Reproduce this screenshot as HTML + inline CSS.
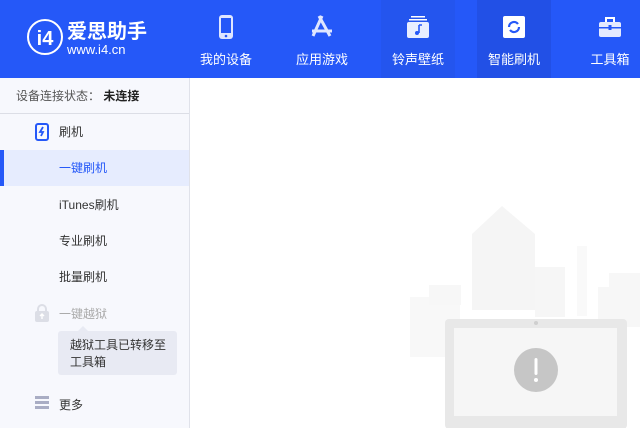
<!DOCTYPE html>
<html><head><meta charset="utf-8"><style>
*{margin:0;padding:0;box-sizing:border-box}
body{width:640px;height:428px;overflow:hidden;background:#fff;font-family:"Liberation Sans","Noto Sans CJK SC",sans-serif;position:relative}
.hdr{position:absolute;left:0;top:0;width:640px;height:78px;background:#2558f8}
.nav{position:absolute;top:0;height:78px;width:74px;text-align:center;color:#fff;font-size:13px}
.nav .lab{position:absolute;top:49px;left:0;right:0}
.nav svg{position:absolute;top:14px;left:50%;margin-left:-12px}
.side{position:absolute;left:0;top:78px;width:190px;height:350px;background:#f7f8fd;border-right:1px solid #e0e2ea}
.it{position:absolute;left:0;width:189px;height:36px;line-height:36px;padding-left:59px;font-size:12px;color:#333}
</style></head><body>
<div class="hdr"></div>
<svg style="position:absolute;left:26px;top:18px" width="38" height="38" viewBox="0 0 38 38"><circle cx="19" cy="19" r="17" fill="none" stroke="#fff" stroke-width="2"/><text x="19" y="27" text-anchor="middle" fill="#fff" font-size="20" font-weight="bold" font-family="Liberation Sans">i4</text></svg>
<div style="position:absolute;left:67px;top:15px;color:#fff;font-size:20px;font-weight:bold">爱思助手</div>
<div style="position:absolute;left:67px;top:42px;color:#fff;font-size:13px">www.i4.cn</div>

<div class="nav" style="left:189px"><svg width="24" height="26" viewBox="0 0 24 26"><rect x="5" y="1" width="14" height="24" rx="3" fill="#dfe6ff"/><rect x="7" y="4" width="10" height="15" fill="#2558f8"/><circle cx="12" cy="22" r="1.3" fill="#2558f8"/></svg><div class="lab">我的设备</div></div>
<div class="nav" style="left:285px"><svg width="24" height="26" viewBox="0 0 24 26"><path d="M12 2 L3 22 M9 2 L20 22 M2 17 H22" stroke="#dfe6ff" stroke-width="3" fill="none"/></svg><div class="lab">应用游戏</div></div>
<div class="nav" style="left:381px;background:#2455ee"><svg width="24" height="26" viewBox="0 0 24 26"><rect x="5" y="2" width="14" height="1.5" fill="#fff"/><rect x="3" y="5" width="18" height="1.5" fill="#fff"/><rect x="1" y="8" width="22" height="16" rx="2" fill="#e8eeff"/><path d="M13 11 V19 M13 11 H16" stroke="#2558f8" stroke-width="1.6"/><circle cx="11" cy="19" r="2" fill="#2558f8"/></svg><div class="lab">铃声壁纸</div></div>
<div class="nav" style="left:477px;background:#2250e6"><svg width="24" height="26" viewBox="0 0 24 26"><rect x="1" y="2" width="22" height="22" rx="2" fill="#fff"/><path d="M7 13 a5 5 0 0 1 9 -3 M17 13 a5 5 0 0 1 -9 3" stroke="#2558f8" stroke-width="2.2" fill="none"/></svg><div class="lab">智能刷机</div></div>
<div class="nav" style="left:573px"><svg width="24" height="26" viewBox="0 0 24 26"><path d="M8 8 V4 H16 V8" stroke="#fff" stroke-width="2" fill="none"/><rect x="1" y="8" width="22" height="15" rx="2" fill="#e4eaff"/><rect x="1" y="13" width="22" height="1.5" fill="#2558f8"/><rect x="10.5" y="11" width="3" height="5" fill="#2558f8"/></svg><div class="lab">工具箱</div></div>

<div class="side">
<div style="position:absolute;left:0;top:0;width:189px;height:36px;border-bottom:1px solid #dcdee6;line-height:36px;padding-left:16px;font-size:12px;color:#555">设备连接状态：&nbsp;<b style="color:#222">未连接</b></div>
<svg style="position:absolute;left:35px;top:45px" width="14" height="18" viewBox="0 0 14 18"><rect x="1" y="1" width="12" height="16" rx="2" fill="none" stroke="#2558f8" stroke-width="2"/><path d="M8 4 L5 9 H8 L6 13" stroke="#2558f8" stroke-width="1.8" fill="none"/></svg>
<div class="it" style="top:36px">刷机</div>
<div class="it" style="top:72px;background:#e6ecfe;color:#2558f8;border-left:4px solid #2558f8;padding-left:55px">一键刷机</div>
<div class="it" style="top:109px">iTunes刷机</div>
<div class="it" style="top:145px">专业刷机</div>
<div class="it" style="top:181px">批量刷机</div>
<svg style="position:absolute;left:35px;top:226px" width="14" height="18" viewBox="0 0 14 18"><path d="M3 8 V5 a4 4 0 0 1 8 0 V8" stroke="#dcdee6" stroke-width="2" fill="none"/><rect x="0" y="7" width="14" height="11" rx="2" fill="#dcdee6"/><path d="M7 15 V10 M5 12 L7 10 L9 12" stroke="#fff" stroke-width="1.4" fill="none"/></svg>
<div class="it" style="top:218px;color:#aaa">一键越狱</div>
<div style="position:absolute;left:78px;top:248px;width:0;height:0;border:5px solid transparent;border-bottom-color:#e8eaf3;border-top:0"></div>
<div style="position:absolute;left:58px;top:253px;width:119px;height:44px;background:#e8eaf3;border-radius:3px;padding:6px 0 0 12px;font-size:12px;line-height:17px;color:#333">越狱工具已转移至<br>工具箱</div>
<div style="position:absolute;left:35px;top:318px;width:14px;height:3px;background:#a9adc4;box-shadow:0 5px 0 #a9adc4,0 10px 0 #a9adc4"></div>
<div class="it" style="top:309px">更多</div>
</div>

<svg style="position:absolute;left:400px;top:190px" width="240" height="238" viewBox="0 0 240 238">
<rect x="10" y="107" width="50" height="60" fill="#f8f8f8"/><rect x="29" y="95" width="32" height="20" fill="#f7f7f7"/>
<path d="M72 44 L102 16 L135 44 V120 H72Z" fill="#f5f5f5"/><rect x="135" y="77" width="30" height="50" fill="#f6f6f6"/>
<rect x="177" y="56" width="10" height="70" fill="#f9f9f9"/><rect x="198" y="97" width="42" height="40" fill="#f7f7f7"/><rect x="209" y="83" width="31" height="20" fill="#f7f7f7"/>
<rect x="45" y="129" width="182" height="110" rx="4" fill="#e8e8e8"/>
<rect x="54" y="138" width="163" height="88" fill="#f6f6f6"/>
<circle cx="136" cy="133" r="2" fill="#cfcfcf"/>
<circle cx="136" cy="180" r="22" fill="#c6c6c6"/>
<rect x="134.5" y="168" width="3" height="17" rx="1.5" fill="#fff"/><circle cx="136" cy="190" r="2" fill="#fff"/>
</svg>
</body></html>
